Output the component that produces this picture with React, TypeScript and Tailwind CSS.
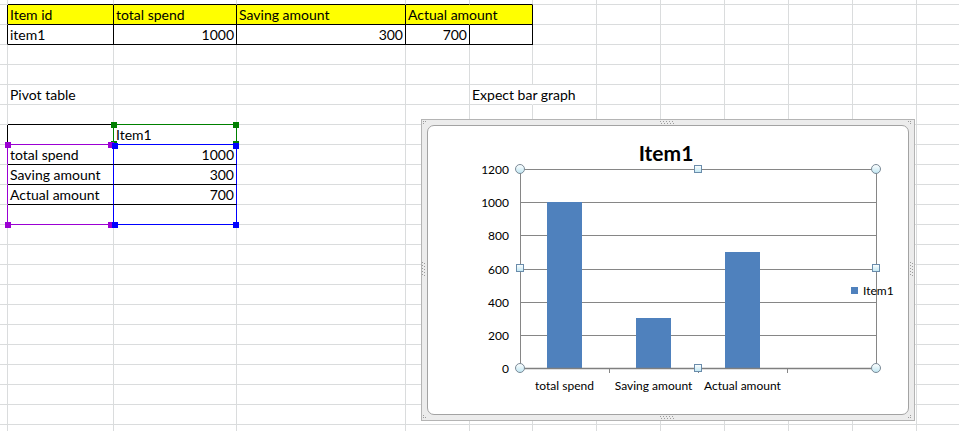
import type { ReactNode } from "react";

type Cell = {
  r?: string;
  b?: string;
  bg?: string;
  text?: string;
  right?: boolean;
};

const ROWS = 23;
const COLS = 13;

const cells: Record<string, Cell> = {
  // top table
  "0-1": { b: "border-b-black" },
  "0-2": { b: "border-b-black" },
  "0-3": { b: "border-b-black" },
  "0-4": { b: "border-b-black" },
  "0-5": { b: "border-b-black" },
  "1-0": { r: "border-r-black" },
  "1-1": { r: "border-r-black", b: "border-b-black", bg: "bg-[#ffff00]", text: "Item id" },
  "1-2": { r: "border-r-black", b: "border-b-black", bg: "bg-[#ffff00]", text: "total spend" },
  "1-3": { r: "border-r-black", b: "border-b-black", bg: "bg-[#ffff00]", text: "Saving amount" },
  "1-4": { r: "border-r-[#ffff00]", b: "border-b-black", bg: "bg-[#ffff00]", text: "Actual amount" },
  "1-5": { r: "border-r-black", b: "border-b-black", bg: "bg-[#ffff00]" },
  "2-0": { r: "border-r-black" },
  "2-1": { r: "border-r-black", b: "border-b-black", text: "item1" },
  "2-2": { r: "border-r-black", b: "border-b-black", text: "1000", right: true },
  "2-3": { r: "border-r-black", b: "border-b-black", text: "300", right: true },
  "2-4": { r: "border-r-black", b: "border-b-black", text: "700", right: true },
  "2-5": { r: "border-r-black", b: "border-b-black" },
  // labels
  "5-1": { text: "Pivot table" },
  "5-5": { text: "Expect bar graph", r: "border-r-white" },
  // pivot table
  "6-1": { b: "border-b-black" },
  "6-2": { b: "border-b-[#008000]" },
  "7-0": { r: "border-r-black" },
  "7-1": { r: "border-r-[#008000]", b: "border-b-[#9b00d3]" },
  "7-2": { r: "border-r-[#008000]", b: "border-b-[#0000ff]", text: "Item1" },
  "8-0": { r: "border-r-[#9b00d3]" },
  "8-1": { r: "border-r-[#0000ff]", b: "border-b-black", text: "total spend" },
  "8-2": { r: "border-r-[#0000ff]", b: "border-b-black", text: "1000", right: true },
  "9-0": { r: "border-r-[#9b00d3]" },
  "9-1": { r: "border-r-[#0000ff]", b: "border-b-black", text: "Saving amount" },
  "9-2": { r: "border-r-[#0000ff]", b: "border-b-black", text: "300", right: true },
  "10-0": { r: "border-r-[#9b00d3]" },
  "10-1": { r: "border-r-[#0000ff]", b: "border-b-black", text: "Actual amount" },
  "10-2": { r: "border-r-[#0000ff]", b: "border-b-black", text: "700", right: true },
  "11-0": { r: "border-r-[#9b00d3]" },
  "11-1": { r: "border-r-[#0000ff]", b: "border-b-[#9b00d3]" },
  "11-2": { r: "border-r-[#0000ff]", b: "border-b-[#0000ff]" },
};

// range handles [x, y, color]
const handles: [number, number, string][] = [
  [111, 122, "#008000"],
  [233, 122, "#008000"],
  [111, 141, "#008000"],
  [233, 141, "#008000"],
  [5, 142, "#9b00d3"],
  [5, 222, "#9b00d3"],
  [108, 142, "#9b00d3"],
  [108, 222, "#9b00d3"],
  [112, 143, "#0000ff"],
  [233, 143, "#0000ff"],
  [112, 222, "#0000ff"],
  [233, 222, "#0000ff"],
];

const Handle = ({ x, y, color }: { x: number; y: number; color: string }) => (
  <div
    className="absolute h-[6px] w-[6px]"
    style={{ left: x, top: y, background: color }}
  />
);

const ticks = [0, 200, 400, 600, 800, 1000, 1200];
const yOf = (v: number) => Math.round(368 - (v * 199) / 1200) + 0.5;
const bars = [1000, 300, 700, 0];
const cats = ["total spend", "Saving amount", "Actual amount"];

const Circle = ({ cx, cy }: { cx: number; cy: number }) => (
  <circle cx={cx} cy={cy} r={4.5} fill="url(#hg)" stroke="#7b8a97" strokeWidth={1} />
);
const Square = ({ cx, cy }: { cx: number; cy: number }) => (
  <rect x={cx - 3.5} y={cy - 3.5} width={7} height={7} fill="url(#hg)" stroke="#6a8cab" strokeWidth={1} />
);

const Dots = ({ pts }: { pts: [number, number][] }) => (
  <g fill="#9c9c9c">
    {pts.map(([x, y], i) => (
      <rect key={i} x={x} y={y} width={1} height={1} />
    ))}
  </g>
);

const hDots = (x0: number, y: number): [number, number][] =>
  [0, 3, 6, 9, 12].flatMap((d) => [
    [x0 + d, y] as [number, number],
    [x0 + d + 1, y + 2] as [number, number],
  ]);
const vDots = (x: number, y0: number): [number, number][] =>
  [0, 3, 6, 9, 12].flatMap((d) => [
    [x, y0 + d] as [number, number],
    [x + 2, y0 + d + 1] as [number, number],
  ]);

const Chart = () => (
  <div className="absolute left-[421px] top-[119px] h-[302px] w-[494px] border border-[#b4b4b4] bg-[#ececec] p-[5px]">
    <div className="h-full w-full rounded-[7px] border border-[#a3a3a3] bg-white" />
    <svg
      className="absolute inset-0"
      width={492}
      height={300}
      viewBox="422 120 492 300"
      fontFamily="Lato, 'Liberation Sans', sans-serif"
    >
      <defs>
        <linearGradient id="hg" x1="0" y1="0" x2="0" y2="1">
          <stop offset="0" stopColor="#ffffff" />
          <stop offset="1" stopColor="#bfe6f2" />
        </linearGradient>
      </defs>
      <Dots pts={[...hDots(660, 121), ...hDots(660, 416), ...vDots(422, 262), ...vDots(910, 262)]} />
      <Dots pts={[[423, 121], [425, 121], [423, 123], [910, 121], [908, 121], [910, 123], [423, 417], [423, 415], [425, 417], [910, 417], [908, 417], [910, 415]]} />

      <text x={666} y={161} textAnchor="middle" fontSize={21} fontWeight={700} fill="#000">
        Item1
      </text>

      {ticks.map((v) => (
        <g key={v}>
          <line x1={520} x2={876} y1={yOf(v)} y2={yOf(v)} stroke="#868686" strokeWidth={1} />
          <text x={509} y={yOf(v) + 4} textAnchor="end" fontSize={12} fill="#000">
            {v}
          </text>
        </g>
      ))}
      <line x1={520.5} x2={520.5} y1={169} y2={369} stroke="#868686" />
      <line x1={876.5} x2={876.5} y1={169} y2={369} stroke="#868686" />
      {[609, 698, 787].map((x) => (
        <line key={x} x1={x + 0.5} x2={x + 0.5} y1={368} y2={373} stroke="#868686" />
      ))}

      {bars.map((v, i) =>
        v > 0 ? (
          <rect
            key={i}
            x={547 + i * 89}
            y={yOf(v) - 0.5}
            width={35}
            height={368 - yOf(v) + 0.5}
            fill="#4f81bd"
          />
        ) : null
      )}
      <line x1={520} x2={876} y1={368.5} y2={368.5} stroke="#7f7f7f" strokeWidth={1.4} />

      {cats.map((c, i) => (
        <text key={c} x={564.5 + i * 89} y={390} textAnchor="middle" fontSize={12} fill="#000">
          {c}
        </text>
      ))}

      <rect x={851} y={287} width={7} height={7} fill="#4f81bd" />
      <text x={863} y={294.5} fontSize={12} fill="#000">
        Item1
      </text>

      <Circle cx={520} cy={169} />
      <Circle cx={876} cy={169} />
      <Circle cx={520} cy={368} />
      <Circle cx={876} cy={368} />
      <Square cx={698} cy={169} />
      <Square cx={520} cy={268} />
      <Square cx={876} cy={268} />
      <Square cx={698} cy={368} />
    </svg>
  </div>
);

const App = () => {
  const grid: ReactNode[] = [];
  for (let row = 0; row < ROWS; row++) {
    for (let col = 0; col < COLS; col++) {
      const c = cells[`${row}-${col}`] ?? {};
      grid.push(
        <div
          key={`${row}-${col}`}
          className={`border-r border-b ${c.r ?? "border-r-[#dadcdd]"} ${c.b ?? "border-b-[#dadcdd]"} ${c.bg ?? ""}`}
        >
          {c.text && (
            <div
              className={`relative z-10 flex h-full items-end whitespace-nowrap px-[2px] text-[14px] leading-[19px] text-black ${c.right ? "justify-end" : ""}`}
            >
              {c.text}
            </div>
          )}
        </div>
      );
    }
  }

  return (
    <div className="relative h-[431px] w-[959px] overflow-hidden bg-white font-['Lato','Liberation_Sans',sans-serif]">
      <div className="grid grid-cols-[8px_106px_123px_169px_64px_63px_repeat(7,64px)] grid-rows-[5px_repeat(22,20px)]">
        {grid}
      </div>
      {handles.map(([x, y, color], i) => (
        <Handle key={i} x={x} y={y} color={color} />
      ))}
      <Chart />
    </div>
  );
};

export default App;
